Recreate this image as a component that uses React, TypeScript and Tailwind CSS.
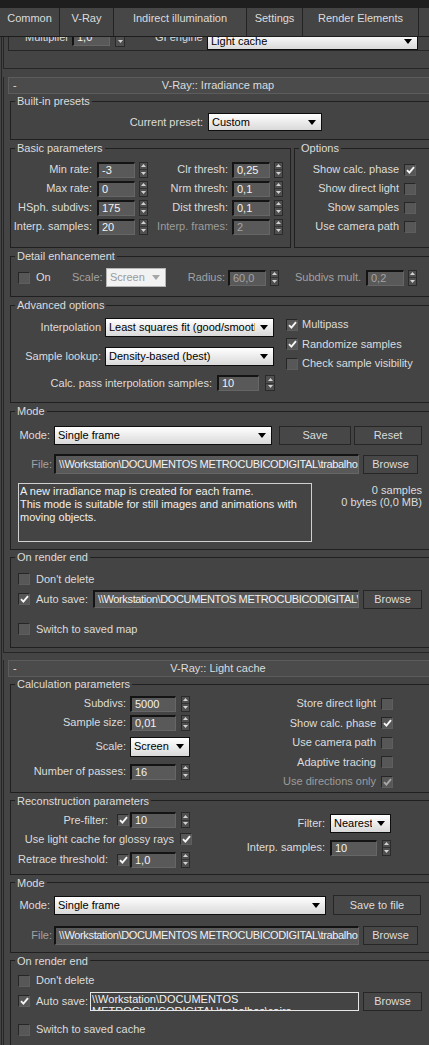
import React from "react";

type P = { className?: string };

const PATH = "\\\\Workstation\\DOCUMENTOS METROCUBICODIGITAL\\trabalho";
const PATH_AUTO = "\\\\Workstation\\DOCUMENTOS METROCUBICODIGITAL\\";

function Arrows({ className = "" }: P) {
  return (
    <div className={`flex w-[9px] shrink-0 flex-col border border-[#2a2a2a] bg-[#4f4f4f] ${className}`}>
      <div className="flex flex-1 items-center justify-center border-b border-[#333]">
        <svg width="5" height="3" viewBox="0 0 5 3">
          <path d="M2.5 0L5 3H0Z" fill="#d2d2d2" />
        </svg>
      </div>
      <div className="flex flex-1 items-center justify-center">
        <svg width="5" height="3" viewBox="0 0 5 3">
          <path d="M0 0H5L2.5 3Z" fill="#d2d2d2" />
        </svg>
      </div>
    </div>
  );
}

function Field({ v, className = "", dim = false }: { v: string; className?: string; dim?: boolean }) {
  return (
    <div
      className={`flex shrink-0 items-center overflow-hidden whitespace-nowrap border-t-2 border-l-2 border-r border-b border-t-[#141414] border-l-[#141414] border-r-[#666] border-b-[#666] bg-[#595959] pl-[3px] ${
        dim ? "text-[#a4a4a4]" : "text-[#f2f2f2]"
      } ${className}`}
    >
      {v}
    </div>
  );
}

function Check({ on = false, dim = false, className = "" }: { on?: boolean; dim?: boolean; className?: string }) {
  return (
    <div
      className={`flex h-[12px] w-[12px] shrink-0 items-center justify-center border border-[#262626] border-r-[#5e5e5e] border-b-[#5e5e5e] bg-[#575757] ${className}`}
    >
      {on && (
        <svg width="9" height="8" viewBox="0 0 9 8">
          <path d="M1 4.2L3.4 6.6L8 1.2" fill="none" stroke={dim ? "#a8a8a8" : "#f6f6f6"} strokeWidth="1.9" />
        </svg>
      )}
    </div>
  );
}

function Drop({ v, className = "", dim = false }: { v: string; className?: string; dim?: boolean }) {
  return (
    <div
      className={`flex shrink-0 items-center border ${
        dim
          ? "border-[#b4b4b4] bg-[#f2f2f2] text-[#9a9a9a]"
          : "border-[#0e0e0e] bg-linear-to-b from-[#ffffff] to-[#d9d9d9] text-[#000]"
      } ${className}`}
    >
      <span className="flex-1 overflow-hidden whitespace-nowrap pl-[3px]">{v}</span>
      <svg className="mx-[5px] shrink-0" width="8" height="5" viewBox="0 0 8 5">
        <path d="M0 0H8L4 5Z" fill={dim ? "#a6a6a6" : "#000"} />
      </svg>
    </div>
  );
}

function Btn({ label, className = "" }: { label: string; className?: string }) {
  return (
    <div className={`flex shrink-0 items-center justify-center border border-[#262626] bg-[#474747] ${className}`}>
      {label}
    </div>
  );
}

function Group({ title, className = "", children }: { title: string; className?: string; children?: React.ReactNode }) {
  return (
    <fieldset className={`min-w-0 border border-[#202020] ${className}`}>
      <legend className="ml-[4px] px-[2px] leading-[14px]">{title}</legend>
      {children}
    </fieldset>
  );
}

function Header({ title }: { title: string }) {
  return (
    <div className="ml-[4px] flex h-[17px] w-[424px] items-center border border-[#5c5c5c] bg-[#4b4b4b]">
      <span className="w-[10px] pl-[4px]">-</span>
      <span className="flex-1 pr-[14px] text-center">{title}</span>
    </div>
  );
}

function Tabs() {
  const tabs: [string, string][] = [
    ["Common", "w-[60px]"],
    ["V-Ray", "w-[54px]"],
    ["Indirect illumination", "w-[133px]"],
    ["Settings", "w-[56px]"],
    ["Render Elements", "w-[116px]"],
  ];
  return (
    <div className="flex h-[29px] border-b border-[#1c1c1c] bg-[#444]">
      {tabs.map(([t, w], i) => (
        <div
          key={t}
          className={`${w} flex shrink-0 justify-center border-r border-[#232323] pt-[4px] ${
            i === 2 ? "bg-[#474747]" : ""
          }`}
        >
          {t}
        </div>
      ))}
    </div>
  );
}

function TopScrolled() {
  return (
    <div className="ml-[1px] h-[32px] overflow-hidden border-l border-b border-[#262626]">
      <div className="ml-[4px] h-[24px] border-l border-b border-[#262626]">
        <div className="-mt-[10px] flex h-[20px] items-center">
          <span className="ml-[16px] w-[47px]">Multiplier</span>
          <Field v="1,0" className="h-[17px] w-[38px]" />
          <div className="ml-[5px] flex h-[12px] w-[10px] items-center justify-center self-end border border-[#2a2a2a] bg-[#4f4f4f]">
            <svg width="5" height="3" viewBox="0 0 5 3">
              <path d="M0 0H5L2.5 3Z" fill="#d2d2d2" />
            </svg>
          </div>
          <span className="ml-[30px] w-[52px]">GI engine</span>
          <Drop v="Light cache" className="mt-[8px] h-[17px] w-[211px]" />
        </div>
      </div>
    </div>
  );
}

function BRow({ l1, v1, l2, v2, dim2 = false }: { l1: string; v1: string; l2: string; v2: string; dim2?: boolean }) {
  return (
    <div className="flex h-[19px] items-center">
      <span className="w-[81px] text-right">{l1}</span>
      <Field v={v1} className="ml-[5px] h-[16px] w-[38px]" />
      <Arrows className="ml-[4px] h-[16px]" />
      <span className={`w-[80px] text-right ${dim2 ? "text-[#9c9c9c]" : ""}`}>{l2}</span>
      <Field v={v2} dim={dim2} className="ml-[4px] h-[16px] w-[38px]" />
      <Arrows className="ml-[4px] h-[16px]" />
    </div>
  );
}

function ORow({ l, on = false, dim = false, h = "h-[19px]" }: { l: string; on?: boolean; dim?: boolean; h?: string }) {
  return (
    <div className={`flex ${h} items-center justify-end gap-[5px]`}>
      <span className={dim ? "text-[#9c9c9c]" : ""}>{l}</span>
      <Check on={on} dim={dim} />
    </div>
  );
}

function LRow({ l, on = false }: { l: string; on?: boolean }) {
  return (
    <div className="flex h-[19.5px] items-center gap-[4px]">
      <Check on={on} />
      <span>{l}</span>
    </div>
  );
}

function CheckLine({ l, on = false, className = "" }: { l: string; on?: boolean; className?: string }) {
  return (
    <div className={`flex h-[20px] items-center ${className}`}>
      <Check on={on} className="ml-[7px]" />
      <span className="ml-[6px]">{l}</span>
    </div>
  );
}

function Irradiance() {
  return (
    <div className="ml-[1px] mt-[8px] border-l border-b border-[#262626] pb-[4px]">
      <Header title="V-Ray:: Irradiance map" />
      <div className="ml-[6px] w-[422px]">
        <Group title="Built-in presets">
          <div className="flex items-center pt-[5px] pb-[8px]">
            <span className="w-[192px] text-right">Current preset:</span>
            <Drop v="Custom" className="ml-[5px] h-[18px] w-[114px]" />
          </div>
        </Group>

        <div className="mt-[1px] flex">
          <Group title="Basic parameters" className="w-[281px]">
            <div className="pt-[5px] pb-[11px]">
              <BRow l1="Min rate:" v1="-3" l2="Clr thresh:" v2="0,25" />
              <BRow l1="Max rate:" v1="0" l2="Nrm thresh:" v2="0,1" />
              <BRow l1="HSph. subdivs:" v1="175" l2="Dist thresh:" v2="0,1" />
              <BRow l1="Interp. samples:" v1="20" l2="Interp. frames:" v2="2" dim2 />
            </div>
          </Group>
          <Group title="Options" className="ml-[3px] w-[138px]">
            <div className="pt-[5px] pr-[15px]">
              <ORow l="Show calc. phase" on />
              <ORow l="Show direct light" />
              <ORow l="Show samples" />
              <ORow l="Use camera path" />
            </div>
          </Group>
        </div>

        <Group title="Detail enhancement" className="mt-[1px]">
          <div className="mt-[5px] mb-[9px] flex h-[19px] items-center">
            <Check className="ml-[7px]" />
            <span className="ml-[6px] w-[36px]">On</span>
            <span className="w-[30px] text-[#a2a2a2]">Scale:</span>
            <Drop v="Screen" dim className="ml-[4px] h-[19px] w-[60px]" />
            <span className="w-[59px] text-right text-[#a2a2a2]">Radius:</span>
            <Field v="60,0" dim className="ml-[3px] h-[16px] w-[38px]" />
            <Arrows className="ml-[4px] h-[16px]" />
            <span className="w-[82px] text-right text-[#a2a2a2]">Subdivs mult.</span>
            <Field v="0,2" dim className="ml-[5px] h-[16px] w-[38px]" />
            <Arrows className="ml-[4px] h-[16px]" />
          </div>
        </Group>

        <Group title="Advanced options" className="mt-[1px]">
          <div className="flex pt-[6px] pb-[11px]">
            <div className="w-[275px]">
              <div className="flex h-[19px] items-center">
                <span className="w-[90px] text-right">Interpolation</span>
                <Drop v="Least squares fit (good/smooth)" className="ml-[4px] h-[19px] w-[169px]" />
              </div>
              <div className="mt-[10px] flex h-[19px] items-center">
                <span className="w-[90px] text-right">Sample lookup:</span>
                <Drop v="Density-based (best)" className="ml-[4px] h-[19px] w-[169px]" />
              </div>
              <div className="mt-[9px] flex h-[16px] items-center">
                <span className="w-[201px] text-right">Calc. pass interpolation samples:</span>
                <Field v="10" className="ml-[5px] h-[16px] w-[42px]" />
                <Arrows className="ml-[6px] h-[16px] w-[10px]" />
              </div>
            </div>
            <div className="-mt-[3px]">
              <LRow l="Multipass" on />
              <LRow l="Randomize samples" on />
              <LRow l="Check sample visibility" />
            </div>
          </div>
        </Group>

        <Group title="Mode" className="mt-[1px]">
          <div className="pt-[8px] pb-[7px]">
            <div className="flex h-[19px] items-center">
              <span className="w-[39px] text-right">Mode:</span>
              <Drop v="Single frame" className="ml-[4px] h-[19px] w-[218px]" />
              <Btn label="Save" className="ml-[7px] h-[19px] w-[72px]" />
              <Btn label="Reset" className="ml-[3px] h-[19px] w-[68px]" />
            </div>
            <div className="mt-[9px] flex h-[20px] items-center">
              <span className="w-[41px] text-right text-[#a2a2a2]">File:</span>
              <Field v={PATH} className="ml-[2px] h-[20px] w-[305px] tracking-[-0.35px]" />
              <Btn label="Browse" className="ml-[4px] mt-[1px] h-[19px] w-[55px]" />
            </div>
            <div className="mt-[9px] flex">
              <div className="ml-[7px] h-[59px] w-[294px] whitespace-nowrap border border-[#d0d0d0] pl-[1px] pt-[1px] text-[#f0f0f0]">
                A new irradiance map is created for each frame.
                <br />
                This mode is suitable for still images and animations with
                <br />
                moving objects.
              </div>
              <div className="flex-1 pr-[9px] pt-[1px] text-right leading-[12px]">
                0 samples
                <br />
                0 bytes (0,0 MB)
              </div>
            </div>
          </div>
        </Group>

        <Group title="On render end">
          <div className="pt-[5px] pb-[8px]">
            <CheckLine l="Don't delete" />
            <div className="flex h-[20px] items-center">
              <Check on className="ml-[7px]" />
              <span className="ml-[6px] w-[53px] whitespace-nowrap">Auto save:</span>
              <Field v={PATH_AUTO} className="ml-[4px] h-[18px] w-[266px] tracking-[-0.35px]" />
              <Btn label="Browse" className="ml-[4px] h-[19px] w-[59px]" />
            </div>
            <CheckLine l="Switch to saved map" className="mt-[10px]" />
          </div>
        </Group>
      </div>
    </div>
  );
}

function CRow({ l, v }: { l: string; v: string }) {
  return (
    <div className="flex h-[19px] items-center">
      <span className="w-[115px] text-right">{l}</span>
      <Field v={v} className="ml-[4px] h-[16px] w-[46px]" />
      <Arrows className="ml-[5px] h-[16px]" />
    </div>
  );
}

function LightCache() {
  return (
    <div className="ml-[1px] mt-[7px] border-l border-[#262626]">
      <Header title="V-Ray:: Light cache" />
      <div className="ml-[6px] w-[422px]">
        <Group title="Calculation parameters">
          <div className="flex pt-[3px]">
            <div className="w-[240px]">
              <CRow l="Subdivs:" v="5000" />
              <CRow l="Sample size:" v="0,01" />
              <div className="mt-[4px] flex h-[21px] items-center">
                <span className="w-[115px] text-right">Scale:</span>
                <Drop v="Screen" className="ml-[4px] h-[20px] w-[60px]" />
              </div>
              <div className="mt-[5px]">
                <CRow l="Number of passes:" v="16" />
              </div>
            </div>
            <div className="flex-1 pr-[38px]">
              <ORow l="Store direct light" h="h-[19.5px]" />
              <ORow l="Show calc. phase" on h="h-[19.5px]" />
              <ORow l="Use camera path" h="h-[19.5px]" />
              <ORow l="Adaptive tracing" h="h-[19.5px]" />
              <ORow l="Use directions only" on dim h="h-[19.5px]" />
            </div>
          </div>
        </Group>

        <Group title="Reconstruction parameters" className="mt-[1px]">
          <div className="flex pt-[3px] pb-[4px]">
            <div className="w-[224px]">
              <div className="flex h-[19px] items-center">
                <span className="w-[97px] text-right">Pre-filter:</span>
                <Check on className="ml-[9px]" />
                <Field v="10" className="ml-[1px] h-[16px] w-[46px]" />
                <Arrows className="ml-[5px] h-[16px]" />
              </div>
              <div className="flex h-[19px] items-center">
                <span className="w-[163px] text-right">Use light cache for glossy rays</span>
                <Check on className="ml-[6px]" />
              </div>
              <div className="mt-[1px] flex h-[20px] items-center">
                <span className="w-[97px] text-right">Retrace threshold:</span>
                <Check on className="ml-[9px]" />
                <Field v="1,0" className="ml-[1px] h-[16px] w-[46px]" />
                <Arrows className="ml-[5px] h-[16px]" />
              </div>
            </div>
            <div>
              <div className="mt-[3px] flex h-[19px] items-center">
                <span className="w-[90px] text-right">Filter:</span>
                <Drop v="Nearest" className="ml-[5px] h-[19px] w-[61px]" />
              </div>
              <div className="mt-[6px] flex h-[18px] items-center">
                <span className="w-[90px] text-right">Interp. samples:</span>
                <Field v="10" className="ml-[5px] h-[16px] w-[47px]" />
                <Arrows className="ml-[5px] h-[16px]" />
              </div>
            </div>
          </div>
        </Group>

        <Group title="Mode" className="mt-[1px]">
          <div className="pt-[6px] pb-[7px]">
            <div className="flex h-[19px] items-center">
              <span className="w-[39px] text-right">Mode:</span>
              <Drop v="Single frame" className="ml-[4px] h-[19px] w-[272px]" />
              <Btn label="Save to file" className="ml-[7px] h-[20px] w-[88px]" />
            </div>
            <div className="mt-[11px] flex h-[19px] items-center">
              <span className="w-[41px] text-right text-[#a2a2a2]">File:</span>
              <Field v={PATH} className="ml-[2px] h-[19px] w-[305px] tracking-[-0.35px]" />
              <Btn label="Browse" className="ml-[4px] h-[19px] w-[55px]" />
            </div>
          </div>
        </Group>

        <Group title="On render end" className="mt-[1px]">
          <div className="pt-[3px] pb-[8px]">
            <CheckLine l="Don't delete" />
            <div className="flex h-[21px] items-center">
              <Check on className="ml-[7px]" />
              <span className="ml-[6px] w-[51px] whitespace-nowrap">Auto save:</span>
              <div className="ml-[3px] h-[19px] w-[269px] overflow-hidden border border-[#e6e6e6] pl-[1px] leading-[12px] text-[#f0f0f0]">
                {"\\\\Workstation\\DOCUMENTOS METROCUBICODIGITAL\\trabalhos\\cairo"}
              </div>
              <Btn label="Browse" className="ml-[4px] h-[19px] w-[59px]" />
            </div>
            <CheckLine l="Switch to saved cache" className="mt-[8px]" />
          </div>
        </Group>
      </div>
    </div>
  );
}

export default function App() {
  return (
    <div className="h-[1045px] w-[429px] overflow-hidden bg-[#444444] font-['Liberation_Sans',Arial,sans-serif] text-[11px] leading-[13px] text-[#dcdcdc]">
      <div className="w-[436px]">
        <div className="h-[8px] bg-[#1e1e1e]" />
        <Tabs />
        <div className="ml-[1px] border-l border-[#262626]">
          <TopScrolled />
          <Irradiance />
          <LightCache />
        </div>
      </div>
    </div>
  );
}
